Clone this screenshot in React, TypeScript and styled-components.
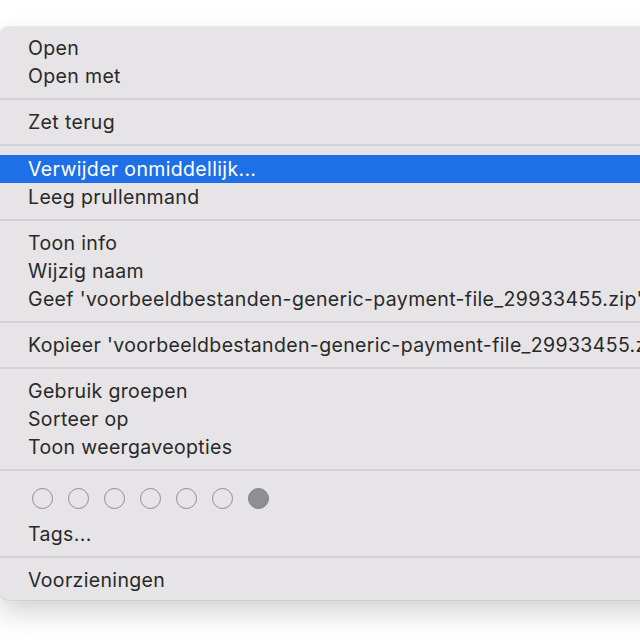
import React from "react";
import styled, { createGlobalStyle } from "styled-components";

const Global = createGlobalStyle`
  html, body { margin: 0; padding: 0; background: #ffffff; overflow: hidden; }
  body { width: 640px; height: 640px; }
`;

const Page = styled.div`
  width: 640px;
  height: 640px;
  padding-top: 27px;
  box-sizing: border-box;
  overflow: hidden;
  font-family: Inter, "Liberation Sans", Arial, sans-serif;
`;

const Menu = styled.div`
  width: 780px;
  margin-left: -1px;
  background: #e6e4e6;
  border-radius: 10px;
  padding: 7px 0 6px;
  box-shadow: 0 12px 28px rgba(0, 0, 0, 0.18), 0 0 0 1px rgba(0, 0, 0, 0.06);
  display: flex;
  flex-direction: column;
`;

const Item = styled.div<{ $active?: boolean }>`
  height: 28px;
  display: flex;
  align-items: center;
  padding-left: 29px;
  font-size: 19.5px;
  letter-spacing: 0.35px;
  color: ${(p) => (p.$active ? "#ffffff" : "#292929")};
  background: ${(p) => (p.$active ? "#1f70e6" : "transparent")};
  white-space: nowrap;
`;

const Separator = styled.div`
  height: 2px;
  margin: 8px 0 8.25px;
  background: #d3d1d3;
`;

const TagRow = styled.div`
  display: flex;
  gap: 15px;
  padding: 8px 0 11px 33px;
`;

const Dot = styled.span<{ $filled?: boolean }>`
  width: 21px;
  height: 21px;
  border-radius: 50%;
  box-sizing: border-box;
  border: 1.5px solid ${(p) => (p.$filled ? "#838287" : "#8d8c90")};
  background: ${(p) => (p.$filled ? "#8f8e93" : "transparent")};
`;

const groups: string[][] = [
  ["Open", "Open met"],
  ["Zet terug"],
  ["Verwijder onmiddellijk...", "Leeg prullenmand"],
  ["Toon info", "Wijzig naam", "Geef 'voorbeeldbestanden-generic-payment-file_29933455.zip'"],
  ["Kopieer 'voorbeeldbestanden-generic-payment-file_29933455.zip'"],
  ["Gebruik groepen", "Sorteer op", "Toon weergaveopties"],
];

export default function App() {
  return (
    <Page>
      <Global />
      <Menu>
        {groups.map((g, gi) => (
          <React.Fragment key={gi}>
            {g.map((label) => (
              <Item key={label} $active={label.startsWith("Verwijder")}>
                {label}
              </Item>
            ))}
            <Separator />
          </React.Fragment>
        ))}
        <TagRow>
          {[0, 1, 2, 3, 4, 5, 6].map((i) => (
            <Dot key={i} $filled={i === 6} />
          ))}
        </TagRow>
        <Item>Tags...</Item>
        <Separator />
        <Item>Voorzieningen</Item>
      </Menu>
    </Page>
  );
}
